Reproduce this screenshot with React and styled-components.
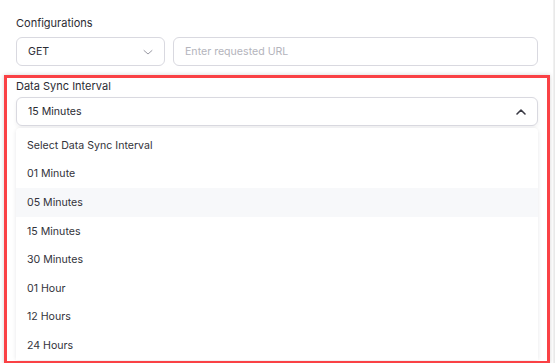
import React from 'react'
import styled, { createGlobalStyle } from 'styled-components'

const GlobalStyle = createGlobalStyle`
  html, body {
    margin: 0;
    padding: 0;
    background: #ffffff;
    font-family: 'Inter', 'Noto Sans', sans-serif;
    overflow: hidden;
  }
`

const Page = styled.div`
  width: 557px;
  height: 363px;
  box-sizing: border-box;
  padding-top: 16px;
  position: relative;
  background: #fff;
  &::after {
    content: '';
    position: absolute;
    top: 0;
    right: 2px;
    width: 2px;
    height: 100%;
    background: linear-gradient(90deg, #f3f3f3, #e6e6e6);
  }
`

const Section = styled.div`
  padding: 0 19px 0 16px;
`

const Label = styled.div`
  font-size: 11px;
  color: #2b2b33;
  line-height: 14px;
  margin-bottom: ${p => p.gap || 6}px;
`

const Row = styled.div`
  display: flex;
  gap: 8px;
`

const Box = styled.div`
  box-sizing: border-box;
  height: 29px;
  border: 1px solid #d9d9e0;
  border-radius: 6px;
  display: flex;
  align-items: center;
  justify-content: space-between;
  padding: 0 10px 0 11px;
  font-size: 10.6px;
  color: ${p => (p.placeholder ? '#b4b4bc' : '#2b2b33')};
  background: #fff;
  width: ${p => (p.w ? `${p.w}px` : 'auto')};
  flex: ${p => (p.w ? 'none' : 1)};
  box-shadow: ${p => (p.raised ? '0 2px 4px rgba(20,20,40,0.06)' : 'none')};
`

const Highlight = styled.div`
  margin: 9px 0 0 4px;
  width: 546px;
  height: 289px;
  box-sizing: border-box;
  border: 3px solid #fa4145;
  padding: 1px 9px 0 9px;
  box-shadow: 0 0 4px rgba(0, 0, 0, 0.18);
  overflow: hidden;
`

const Menu = styled.ul`
  list-style: none;
  margin: 2px 0 0 0;
  padding: 3px 0 0 0;
  background: #fff;
  border-radius: 4px;
  box-shadow: 0 1px 4px rgba(20, 20, 40, 0.1);
`

const Item = styled.li`
  height: 28.6px;
  display: flex;
  align-items: center;
  padding-left: 11px;
  font-size: 10.6px;
  color: #33333b;
  background: ${p => (p.active ? '#f7f8fa' : '#fff')};
`

const Chevron = ({ up, color = '#9a9aa4' }) => (
  <svg width="12" height="12" viewBox="0 0 12 12" fill="none">
    <path
      d={up ? 'M2 8 L6 4 L10 8' : 'M2 4.5 L6 8 L10 4.5'}
      stroke={color}
      strokeWidth={up ? 1.6 : 1}
      strokeLinecap="round"
      strokeLinejoin="round"
    />
  </svg>
)

const options = [
  'Select Data Sync Interval',
  '01 Minute',
  '05 Minutes',
  '15 Minutes',
  '30 Minutes',
  '01 Hour',
  '12 Hours',
  '24 Hours',
]

export default function App() {
  return (
    <Page>
      <GlobalStyle />
      <Section>
        <Label gap={7}>Configurations</Label>
        <Row>
          <Box w={149}>
            GET
            <Chevron />
          </Box>
          <Box placeholder>Enter requested URL</Box>
        </Row>
      </Section>
      <Highlight>
        <Label gap={4}>Data Sync Interval</Label>
        <Box raised>
          15 Minutes
          <Chevron up color="#3a3a44" />
        </Box>
        <Menu>
          {options.map(o => (
            <Item key={o} active={o === '05 Minutes'}>
              {o}
            </Item>
          ))}
        </Menu>
      </Highlight>
    </Page>
  )
}
